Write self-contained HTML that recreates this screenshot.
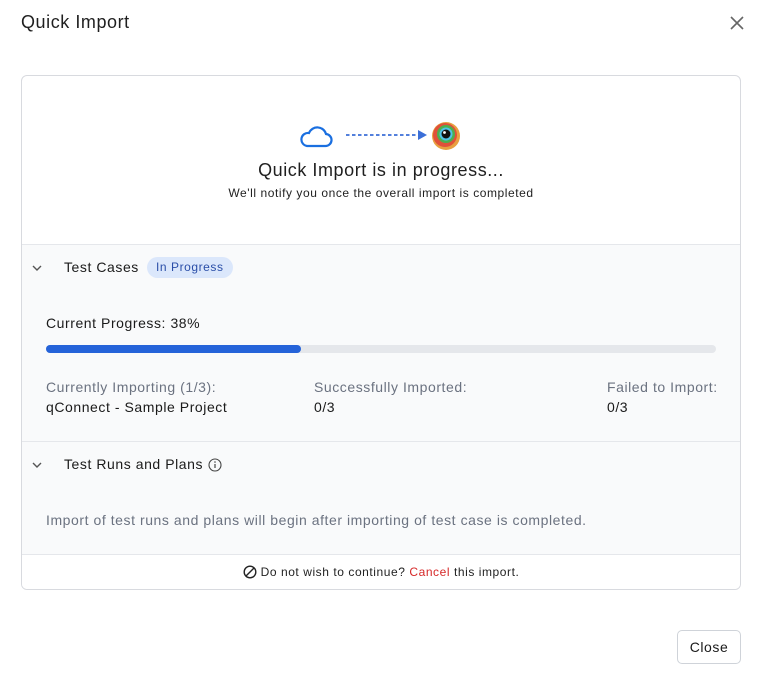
<!DOCTYPE html>
<html><head><style>
*{box-sizing:border-box;margin:0;padding:0}
body{width:762px;height:680px;background:#fff;font-family:"Liberation Sans",sans-serif;color:#1a1a1a;position:relative;overflow:hidden;letter-spacing:0.035em}
.abs{position:absolute}
.card{position:absolute;left:21px;top:75px;width:720px;height:515px;border:1px solid #d8dadf;border-radius:6px;overflow:hidden}
.sec{position:absolute;left:0;width:718px;background:#f9fafb;border-top:1px solid #e5e7eb}
.gray{color:#6b7280}
</style></head><body>
<div class="abs" style="left:21px;top:12px;font-size:18px;color:#1f1f1f">Quick Import</div>
<svg class="abs" style="left:729px;top:15px" width="16" height="16" viewBox="0 0 16 16"><path d="M2 2L14 14M14 2L2 14" stroke="#666" stroke-width="1.6"/></svg>
<div class="card">
 <svg class="abs" style="left:277px;top:46px" width="42" height="28" viewBox="0 0 42 28"><path d="M8 24h18a6 6 0 0 0 1-12 9 9 0 0 0-17-1 6.5 6.5 0 0 0-2 13z" fill="none" stroke="#1a6fe0" stroke-width="2.2"/></svg>
 <svg class="abs" style="left:322px;top:53px" width="86" height="12"><line x1="2" y1="6" x2="74" y2="6" stroke="#3b6fd8" stroke-width="1.8" stroke-dasharray="3.5 2.5"/><path d="M74 1L83 6L74 11z" fill="#3b6fd8"/></svg>
 <svg class="abs" style="left:409px;top:45px" width="30" height="30" viewBox="0 0 30 30"><circle cx="15" cy="15" r="14" fill="#e8a040"/><circle cx="14" cy="14" r="12" fill="#e0513a"/><circle cx="15" cy="13" r="9" fill="#4caf50"/><circle cx="15" cy="13" r="6.5" fill="#4fc3e8"/><circle cx="15" cy="13" r="4.5" fill="#111"/><circle cx="13.5" cy="11.5" r="1.4" fill="#fff"/></svg>
 <div class="abs" style="left:0;width:718px;top:84px;text-align:center;font-size:18px;color:#1f1f1f">Quick Import is in progress...</div>
 <div class="abs" style="left:0;width:718px;top:110px;text-align:center;font-size:12px;color:#222">We'll notify you once the overall import is completed</div>
 <div class="sec" style="top:168px;height:198px">
  <svg class="abs" style="left:9px;top:18px" width="12" height="10"><path d="M2 3l4 4 4-4" fill="none" stroke="#555" stroke-width="1.4"/></svg>
  <div class="abs" style="left:42px;top:14px;font-size:14px">Test Cases</div>
  <div class="abs" style="left:125px;top:12px;height:21px;padding:0 9px;line-height:21px;border-radius:11px;background:#dbe7fb;color:#2a4ea8;font-size:12px">In Progress</div>
  <div class="abs" style="left:24px;top:70px;font-size:14px">Current Progress: 38%</div>
  <div class="abs" style="left:24px;top:100px;width:670px;height:8px;border-radius:4px;background:#e5e7eb"><div style="width:255px;height:8px;border-radius:4px;background:#2563d9"></div></div>
  <div class="abs gray" style="left:24px;top:134px;font-size:14px">Currently Importing (1/3):</div>
  <div class="abs" style="left:24px;top:154px;font-size:14px">qConnect - Sample Project</div>
  <div class="abs gray" style="left:292px;top:134px;font-size:14px">Successfully Imported:</div>
  <div class="abs" style="left:292px;top:154px;font-size:14px">0/3</div>
  <div class="abs gray" style="left:585px;top:134px;font-size:14px">Failed to Import:</div>
  <div class="abs" style="left:585px;top:154px;font-size:14px">0/3</div>
 </div>
 <div class="sec" style="top:365px;height:114px">
  <svg class="abs" style="left:9px;top:18px" width="12" height="10"><path d="M2 3l4 4 4-4" fill="none" stroke="#555" stroke-width="1.4"/></svg>
  <div class="abs" style="left:42px;top:14px;font-size:14px">Test Runs and Plans</div>
  <svg class="abs" style="left:186px;top:16px" width="14" height="14" viewBox="0 0 14 14"><circle cx="7" cy="7" r="6" fill="none" stroke="#444" stroke-width="1.1"/><path d="M7 6v4" stroke="#444" stroke-width="1.2"/><circle cx="7" cy="4" r=".8" fill="#444"/></svg>
  <div class="abs gray" style="left:24px;top:70px;font-size:14px">Import of test runs and plans will begin after importing of test case is completed.</div>
 </div>
 <div class="abs" style="left:0;top:478px;width:718px;height:36px;border-top:1px solid #e5e7eb;background:#fff;text-align:center;font-size:12px;line-height:34px;color:#222">
  <svg style="vertical-align:-3px;margin-right:4px" width="14" height="14" viewBox="0 0 14 14"><circle cx="7" cy="7" r="5.8" fill="none" stroke="#222" stroke-width="1.4"/><path d="M3 11L11 3" stroke="#222" stroke-width="1.4"/></svg>Do not wish to continue? <span style="color:#d62828">Cancel</span> this import.
 </div>
</div>
<div class="abs" style="left:677px;top:630px;width:64px;height:34px;border:1px solid #cfd3d9;border-radius:5px;text-align:center;line-height:32px;font-size:14px">Close</div>
</body></html>
